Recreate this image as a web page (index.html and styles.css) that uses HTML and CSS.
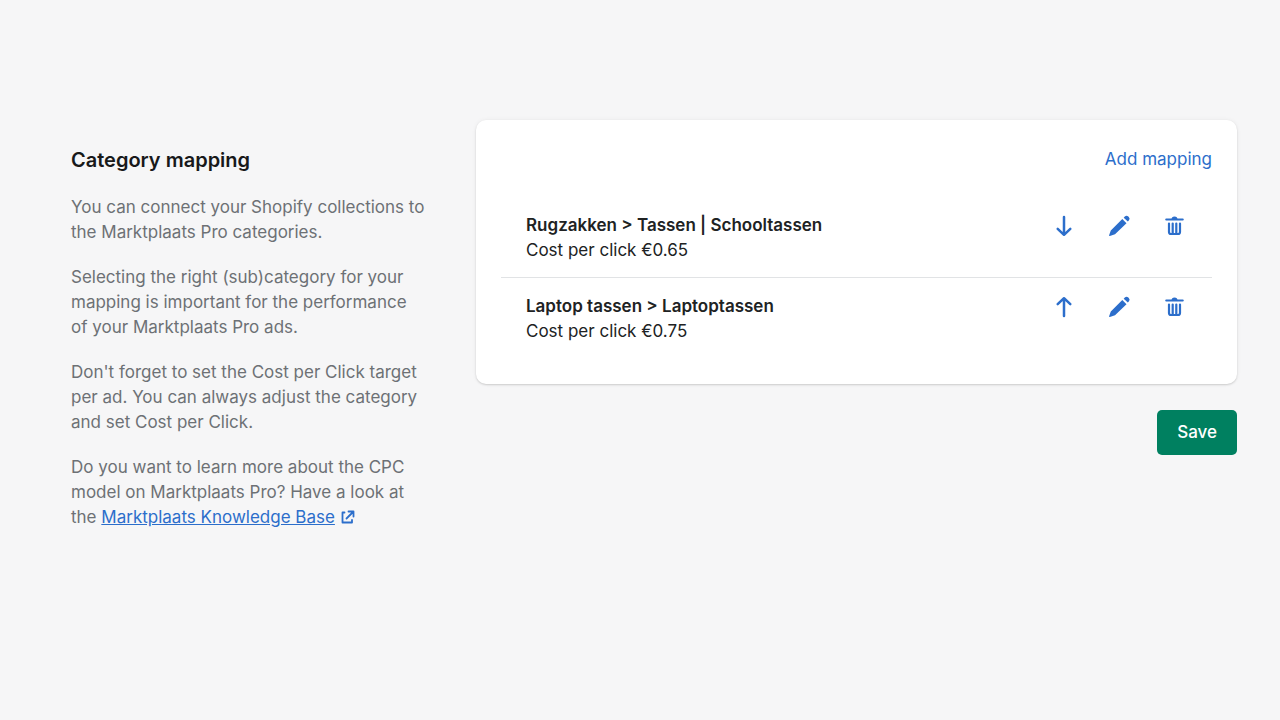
FILE: index.html
```html
<!DOCTYPE html>
<html lang="en">
<head>
<meta charset="utf-8">
<meta name="viewport" content="width=device-width, initial-scale=1">
<title>Category mapping</title>
<link rel="stylesheet" href="styles.css">
</head>
<body>
<svg class="sprite" aria-hidden="true">
  <symbol id="down" viewBox="0 0 25 25"><path d="M12 3V20.500M5.700 14.800L12 20.800l6.300-6" fill="none" stroke="currentColor" stroke-width="2.500" stroke-linecap="round" stroke-linejoin="round"/></symbol>
  <symbol id="up" viewBox="0 0 25 25"><path d="M12 21V3.500M5.700 9.200L12 3.200l6.300 6" fill="none" stroke="currentColor" stroke-width="2.500" stroke-linecap="round" stroke-linejoin="round"/></symbol>
  <symbol id="edit" viewBox="0 0 25 25"><path d="M15.300 5l4.200 4.200L8 20.300l-5.200 1.600a.6.600 0 0 1-.7-.7L3.800 16.500zM16.700 3.700l1.100-1.100a2.500 2.500 0 0 1 3.500 0l.5.500a2.500 2.500 0 0 1 0 3.500l-1 1z" fill="currentColor"/></symbol>
  <symbol id="trash" viewBox="0 0 25 25"><path d="M4.300 5.500H20.700M7 9.500V18a2 2 0 0 0 2 2h7a2 2 0 0 0 2-2V9.500M10.700 9.500V19.500M14.300 9.500V19.500" fill="none" stroke="currentColor" stroke-width="2.200" stroke-linecap="round"/><path d="M9.500 5.500a3 3 0 0 1 6 0z" fill="currentColor"/></symbol>
</svg>
<main class="page">
  <section class="intro">
    <h1>Category mapping</h1>
    <p>You can connect your Shopify collections to the Marktplaats Pro categories.</p>
    <p>Selecting the right (sub)category for your mapping is important for the performance of your Marktplaats Pro ads.</p>
    <p>Don't forget to set the Cost per Click target per ad. You can always adjust the category and set Cost per Click.</p>
    <p>Do you want to learn more about the CPC model on Marktplaats Pro? Have a look at the <a href="#">Marktplaats Knowledge Base</a> <svg class="external" viewBox="0 0 16 16" aria-hidden="true"><path d="M4.500 3.500H2.500V13.500H12V11M8.500 2.500H13.500V7.500M13 3L6.500 9.500" fill="none" stroke="currentColor" stroke-width="1.800" stroke-linecap="round" stroke-linejoin="round"/></svg></p>
  </section>
  <section class="content">
    <div class="card">
      <button class="add" type="button">Add mapping</button>
      <ul class="list">
        <li class="row">
          <div class="text"><h2>Rugzakken &gt; Tassen | Schooltassen</h2><p>Cost per click €0.65</p></div>
          <div class="actions">
            <button type="button" aria-label="Move down"><svg><use href="#down"/></svg></button>
            <button type="button" aria-label="Edit"><svg><use href="#edit"/></svg></button>
            <button type="button" aria-label="Delete"><svg><use href="#trash"/></svg></button>
          </div>
        </li>
        <li class="row">
          <div class="text"><h2>Laptop tassen &gt; Laptoptassen</h2><p>Cost per click €0.75</p></div>
          <div class="actions">
            <button type="button" aria-label="Move up"><svg><use href="#up"/></svg></button>
            <button type="button" aria-label="Edit"><svg><use href="#edit"/></svg></button>
            <button type="button" aria-label="Delete"><svg><use href="#trash"/></svg></button>
          </div>
        </li>
      </ul>
    </div>
    <button class="save" type="button">Save</button>
  </section>
</main>
</body>
</html>
```
FILE: styles.css
```css
* { box-sizing: border-box; }
body {
  margin: 0;
  background: #f6f6f7;
  color: #202223;
  font: 17px/25px Inter, "Liberation Sans", sans-serif;
}
h1, h2, p, ul { margin: 0; padding: 0; }
button { font: inherit; border: 0; cursor: pointer; }
.sprite { display: none; }
.page {
  display: grid;
  grid-template-columns: minmax(0, 355px) minmax(0, 1fr);
  gap: 50px;
  padding: 120px 43px 40px 71px;
}
.intro { padding-top: 25px; color: #6d7175; }
.intro h1 {
  margin-bottom: 20px;
  color: #18191a;
  font-size: 20px;
  line-height: 30px;
  font-weight: 600;
}
.intro p + p { margin-top: 20px; }
.intro a, .external { color: #2c6ecb; }
.external { width: 16px; height: 16px; vertical-align: -2px; }
.content { display: flex; flex-direction: column; align-items: flex-end; gap: 26px; }
.card {
  width: 100%;
  display: flex;
  flex-direction: column;
  padding: 27px 25px 26px;
  border-radius: 10px;
  background: #fff;
  box-shadow: 0 0 5px rgba(23, 24, 24, 0.05), 0 1px 2px rgba(0, 0, 0, 0.15);
}
.add { align-self: flex-end; padding: 0; background: none; color: #2c6ecb; }
.list { margin-top: 25px; list-style: none; }
.row { display: flex; justify-content: space-between; padding: 16px 25px 14px; }
.row + .row { border-top: 1px solid #e1e3e5; }
.row h2 { font-size: 17px; font-weight: 600; line-height: 25px; }
.actions { display: flex; align-items: flex-start; gap: 30px; }
.actions button { display: flex; padding: 1px 0 0; background: none; color: #2c6ecb; }
.actions svg { width: 25px; height: 25px; }
.save {
  padding: 10px 20px;
  border-radius: 5px;
  background: #008060;
  color: #fff;
  font-weight: 500;
}
```
